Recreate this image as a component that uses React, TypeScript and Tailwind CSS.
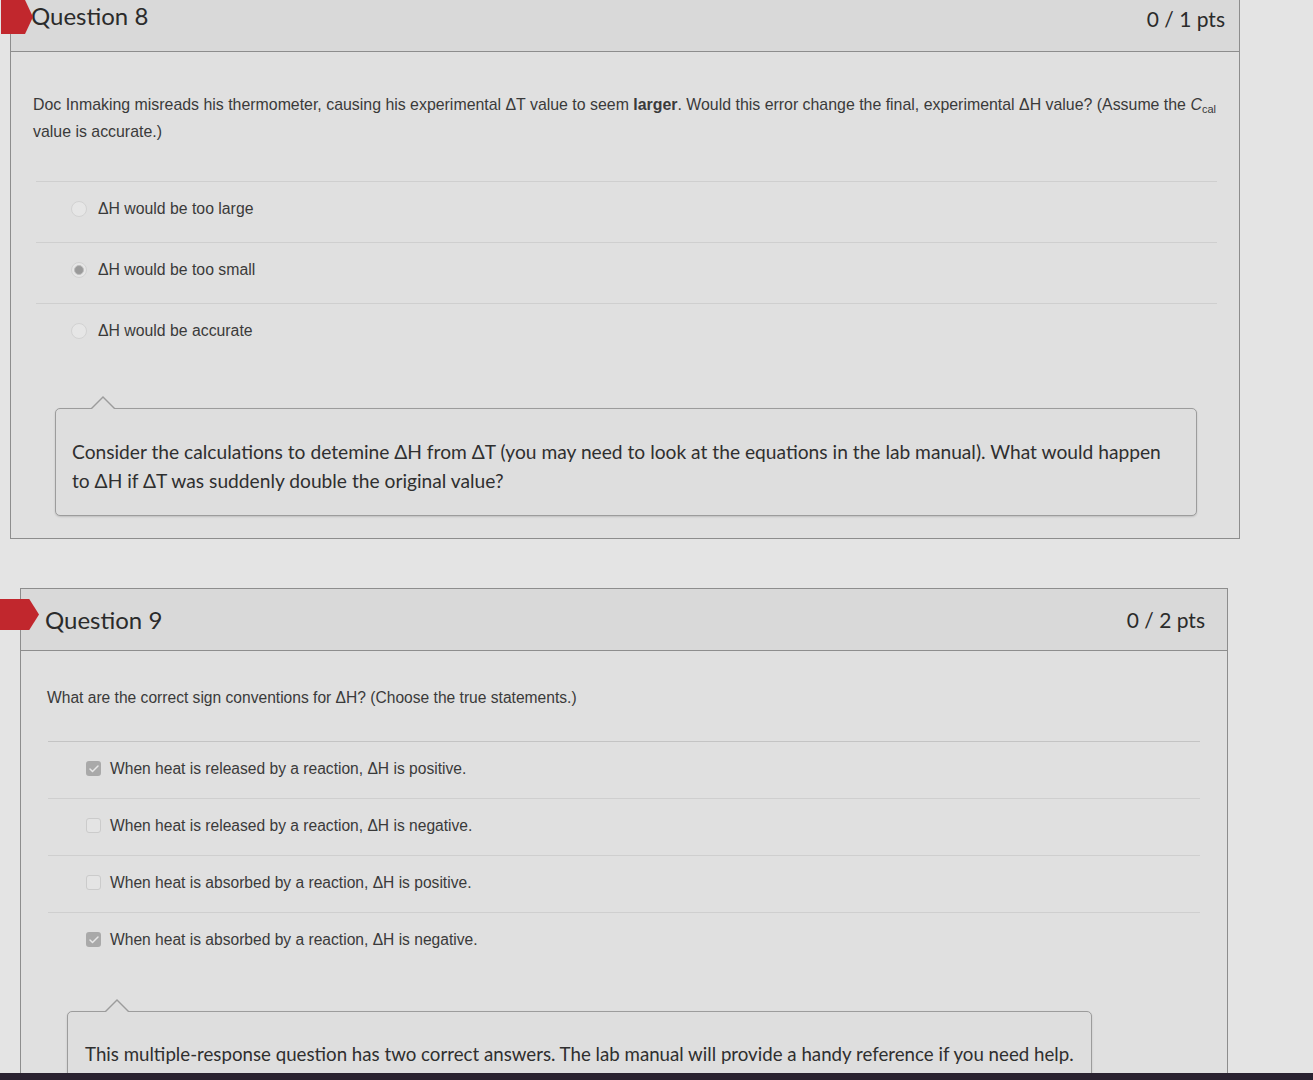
import { Check } from 'lucide-react';

const sans = { fontFamily: '"Liberation Sans", Arial, sans-serif' };
const lato = { fontFamily: 'Lato, "Open Sans", sans-serif' };

function Flag({ className }: { className: string }) {
    return (
        <svg className={className} viewBox="0 0 40 32" preserveAspectRatio="none">
            <path d="M0 0 H30 L40 16 L30 32 H0 Z" fill="#c1272d" />
        </svg>
    );
}

function Radio({ checked }: { checked?: boolean }) {
    return (
        <span className="w-[16px] h-[16px] rounded-full border border-[#d2d2d2] bg-[#e6e6e6] flex items-center justify-center shrink-0">
            {checked && <span className="w-[10px] h-[10px] rounded-full bg-[#9a9a9a] border border-[#bdbdbd]" />}
        </span>
    );
}

function Box({ checked }: { checked?: boolean }) {
    return checked ? (
        <span className="w-[15px] h-[15px] rounded-[3px] bg-[#a9a9a9] flex items-center justify-center shrink-0">
            <Check className="w-[12px] h-[12px] text-[#e8e8e8]" strokeWidth={3} />
        </span>
    ) : (
        <span className="w-[15px] h-[15px] rounded-[3px] border border-[#cbcbcb] bg-[#e4e4e4] shrink-0" />
    );
}

function Callout({ arrowLeft, children, className }: { arrowLeft: string; children: React.ReactNode; className: string }) {
    return (
        <div className={`relative border border-[#9c9c9c] rounded-[5px] bg-[#dedede] shadow-[0_1px_2px_rgba(0,0,0,0.15)] ${className}`}>
            <span className={`absolute -top-[13px] ${arrowLeft} w-0 h-0 border-l-[13px] border-r-[13px] border-b-[13px] border-l-transparent border-r-transparent border-b-[#9c9c9c]`} />
            <span className={`absolute -top-[11px] ${arrowLeft} ml-[1px] w-0 h-0 border-l-[12px] border-r-[12px] border-b-[12px] border-l-transparent border-r-transparent border-b-[#dedede]`} />
            {children}
        </div>
    );
}

const q8Answers = [
    { text: 'ΔH would be too large', checked: false },
    { text: 'ΔH would be too small', checked: true },
    { text: 'ΔH would be accurate', checked: false },
];

const q9Answers = [
    { text: 'When heat is released by a reaction, ΔH is positive.', checked: true },
    { text: 'When heat is released by a reaction, ΔH is negative.', checked: false },
    { text: 'When heat is absorbed by a reaction, ΔH is positive.', checked: false },
    { text: 'When heat is absorbed by a reaction, ΔH is negative.', checked: true },
];

export default function App() {
    return (
        <div className="h-[1080px] w-[1313px] overflow-hidden flex flex-col bg-[#e4e4e4]">
            <div className="flex-1 overflow-hidden">
                {/* Question 8 */}
                <div className="relative ml-[10px] w-[1230px] border-x border-b border-[#8d8d8d] bg-[#e0e0e0]">
                    <Flag className="absolute -left-[10px] top-0 w-[32px] h-[34px]" />
                    <div className="h-[52px] flex justify-between pl-[20px] pr-[14px] bg-[#d9d9d9] border-b border-[#8d8d8d]" style={lato}>
                        <h2 className="text-[24px] text-[#2b2b2b] leading-[32px]">Question 8</h2>
                        <span className="text-[21px] text-[#2b2b2b] leading-[38px]">0 / 1 pts</span>
                    </div>
                    <div className="pt-[39px] pb-[22px]">
                        <p className="pl-[22px] text-[15.9px] leading-[27px] text-[#3a3a3a]" style={sans}>
                            Doc Inmaking misreads his thermometer, causing his experimental ΔT value to seem <strong>larger</strong>. Would this error change the final, experimental ΔH value? (Assume the <i>C</i><sub className="text-[11px]">cal</sub> value is accurate.)
                        </p>
                        <div className="mt-[36px] ml-[25px] mr-[22px]">
                            {q8Answers.map(a => (
                                <div key={a.text} className="h-[61px] border-t border-[#cfcfcf] flex items-center gap-[11px] pl-[35px] pb-[6px]">
                                    <Radio checked={a.checked} />
                                    <span className="text-[15.8px] text-[#3a3a3a]" style={sans}>{a.text}</span>
                                </div>
                            ))}
                        </div>
                        <Callout arrowLeft="left-[34px]" className="mt-[44px] ml-[44px] mr-[42px] pt-[28px] pb-[20px] px-[16px]">
                            <p className="w-[1102px] text-[19.2px] leading-[29px] text-[#2f2f2f]" style={lato}>
                                Consider the calculations to detemine ΔH from ΔT (you may need to look at the equations in the lab manual). What would happen to ΔH if ΔT was suddenly double the original value?
                            </p>
                        </Callout>
                    </div>
                </div>

                {/* Question 9 */}
                <div className="relative mt-[49px] ml-[20px] w-[1208px] border border-[#8d8d8d] bg-[#e0e0e0]">
                    <Flag className="absolute -left-[21px] top-[10px] w-[39px] h-[31px]" />
                    <div className="h-[62px] flex items-center justify-between pl-[24px] pr-[22px] bg-[#d9d9d9] border-b border-[#8d8d8d]" style={lato}>
                        <h2 className="text-[24px] text-[#2b2b2b]">Question 9</h2>
                        <span className="text-[21px] text-[#2b2b2b]">0 / 2 pts</span>
                    </div>
                    <div className="pt-[33px] pb-[40px]">
                        <p className="pl-[26px] text-[15.6px] leading-[27px] text-[#3a3a3a]" style={sans}>
                            What are the correct sign conventions for ΔH? (Choose the true statements.)
                        </p>
                        <div className="mt-[30px] ml-[27px] mr-[27px]">
                            {q9Answers.map((a, i) => (
                                <div key={i} className="h-[57px] border-t border-[#cfcfcf] flex items-center gap-[9px] pl-[38px] pb-[3px] first:border-[#c4c4c4]">
                                    <Box checked={a.checked} />
                                    <span className="text-[15.6px] text-[#3a3a3a]" style={sans}>{a.text}</span>
                                </div>
                            ))}
                        </div>
                        <Callout arrowLeft="left-[36px]" className="mt-[42px] ml-[46px] mr-[135px] pt-[28px] pb-[20px] px-[17px]">
                            <p className="text-[18.7px] leading-[29px] text-[#2f2f2f] whitespace-nowrap" style={lato}>
                                This multiple-response question has two correct answers. The lab manual will provide a handy reference if you need help.
                            </p>
                        </Callout>
                    </div>
                </div>
            </div>
            <div className="h-[7px] bg-[#2a2230] shrink-0" />
        </div>
    );
}
